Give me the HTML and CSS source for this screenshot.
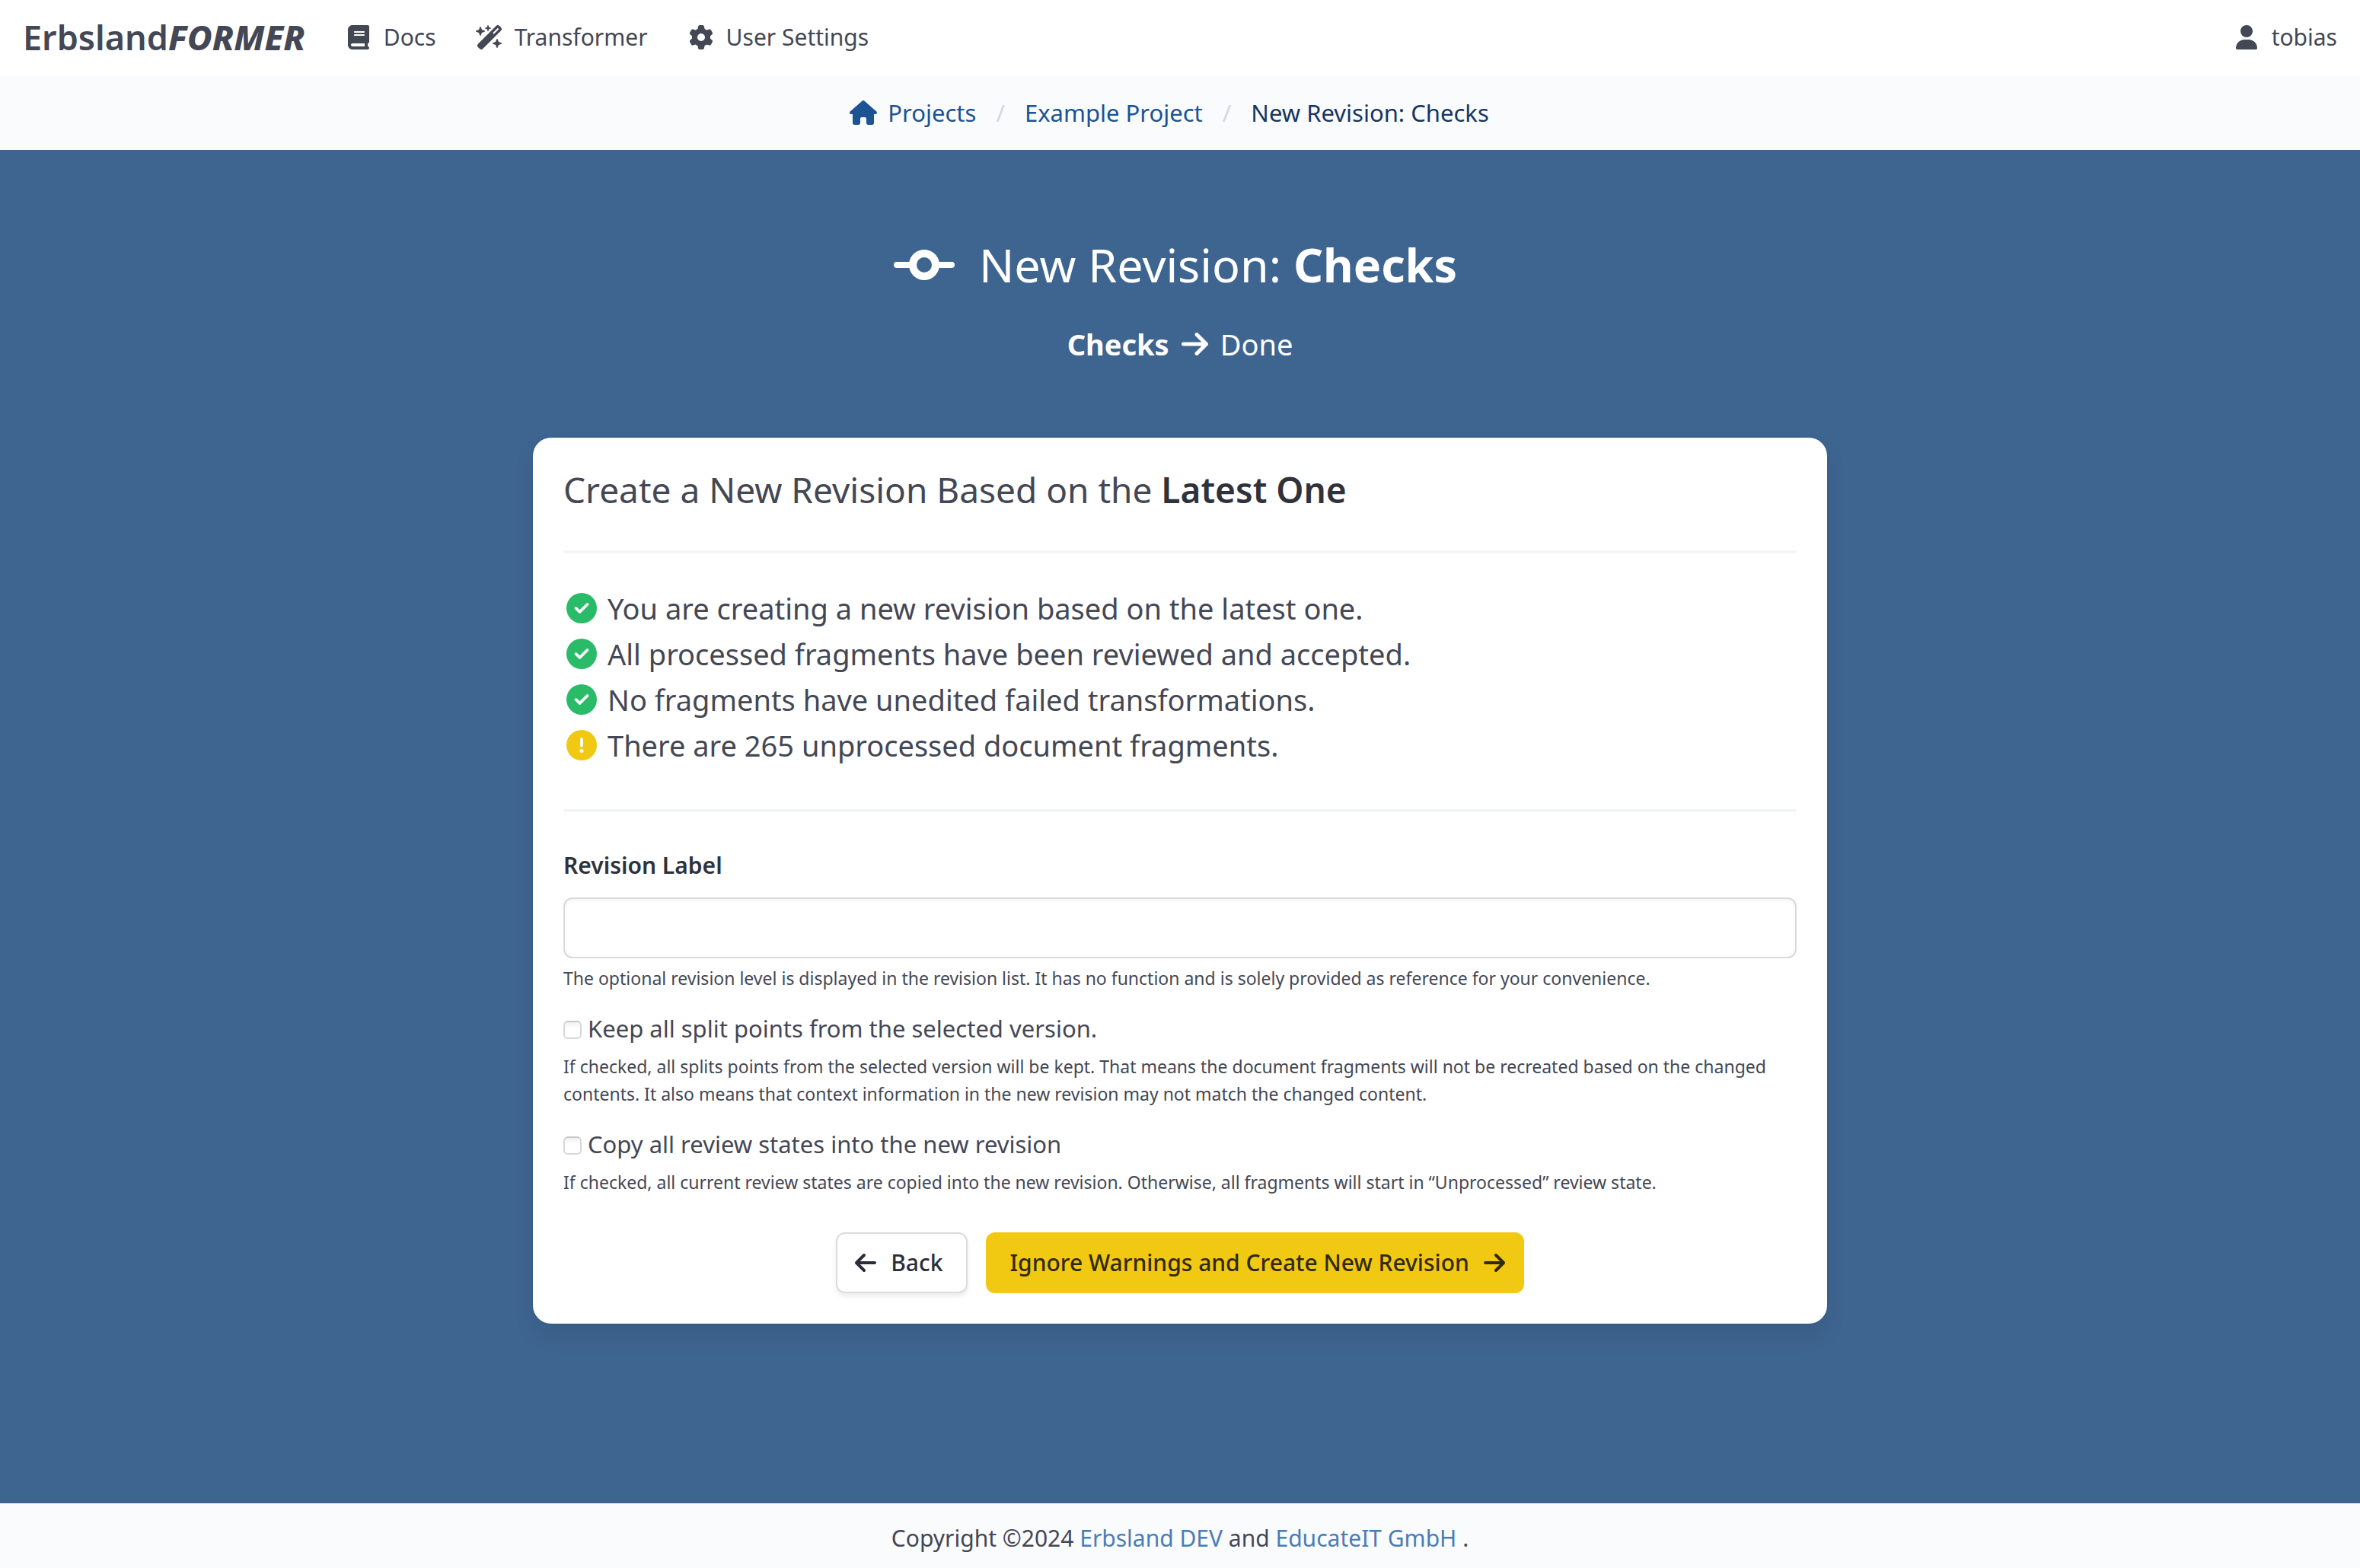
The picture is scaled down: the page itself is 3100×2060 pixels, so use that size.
FILE: index.html
```html
<!DOCTYPE html>
<html lang="en">
<head>
<meta charset="utf-8">
<meta name="viewport" content="width=device-width, initial-scale=1">
<title>New Revision: Checks</title>
<link rel="stylesheet" href="styles.css">
</head>
<body>
<svg class="sprite" aria-hidden="true">
  <symbol id="i-book" viewBox="0 0 448 512"><path d="M96 0C43 0 0 43 0 96V416c0 53 43 96 96 96H384h32c17.700 0 32-14.300 32-32s-14.300-32-32-32V384c17.700 0 32-14.300 32-32V32c0-17.700-14.300-32-32-32H384 96zm0 384H352v64H96c-17.700 0-32-14.300-32-32s14.300-32 32-32zm32-240c0-8.800 7.200-16 16-16H336c8.800 0 16 7.200 16 16s-7.200 16-16 16H144c-8.800 0-16-7.200-16-16zm16 48H336c8.800 0 16 7.200 16 16s-7.200 16-16 16H144c-8.800 0-16-7.200-16-16s7.200-16 16-16z"/></symbol>
  <symbol id="i-wand" viewBox="0 0 576 512"><path d="M234.700 42.700L197 56.800c-3 1.100-5 4-5 7.200s2 6.100 5 7.200l37.700 14.100L248.800 123c1.100 3 4 5 7.200 5s6.100-2 7.200-5l14.100-37.700L315 71.200c3-1.100 5-4 5-7.200s-2-6.100-5-7.200L277.300 42.700 263.200 5c-1.100-3-4-5-7.200-5s-6.100 2-7.200 5L234.700 42.700zM46.100 395.400c-18.700 18.700-18.700 49.100 0 67.900l34.600 34.600c18.700 18.700 49.100 18.700 67.900 0L529.900 116.500c18.700-18.700 18.700-49.100 0-67.900L495.300 14.100c-18.700-18.700-49.100-18.700-67.900 0L46.100 395.400zM484.600 82.600l-105 105-23.300-23.300 105-105 23.300 23.300zM7.500 117.200C3 118.900 0 123.200 0 128s3 9.100 7.500 10.800L64 160l21.200 56.500c1.700 4.500 6 7.500 10.800 7.500s9.100-3 10.800-7.500L128 160l56.500-21.200c4.500-1.700 7.500-6 7.500-10.800s-3-9.100-7.500-10.800L128 96 106.800 39.500C105.100 35 100.800 32 96 32s-9.100 3-10.800 7.500L64 96 7.500 117.200zm352 256c-4.500 1.700-7.500 6-7.500 10.800s3 9.100 7.500 10.800L416 416l21.200 56.500c1.700 4.500 6 7.500 10.800 7.500s9.100-3 10.800-7.500L480 416l56.500-21.200c4.500-1.700 7.500-6 7.500-10.800s-3-9.100-7.500-10.800L480 352l-21.200-56.500c-1.700-4.500-6-7.500-10.800-7.500s-9.100 3-10.800 7.500L416 352l-56.500 21.200z"/></symbol>
  <symbol id="i-gear" viewBox="0 0 512 512"><path d="M495.900 166.600c3.200 8.700 .5 18.400-6.400 24.600l-43.300 39.400c1.100 8.300 1.700 16.800 1.700 25.400s-.6 17.100-1.700 25.400l43.300 39.400c6.900 6.200 9.600 15.900 6.400 24.600c-4.400 11.900-9.700 23.300-15.800 34.300l-4.700 8.100c-6.600 11-14 21.400-22.100 31.200c-5.900 7.200-15.700 9.600-24.500 6.800l-55.700-17.700c-13.400 10.300-28.200 18.900-44 25.400l-12.500 57.100c-2 9.100-9 16.300-18.200 17.800c-13.800 2.300-28 3.500-42.500 3.500s-28.700-1.200-42.500-3.500c-9.200-1.500-16.200-8.700-18.200-17.800l-12.500-57.100c-15.800-6.500-30.600-15.100-44-25.400L83.100 425.900c-8.800 2.800-18.600 .3-24.500-6.800c-8.100-9.800-15.500-20.200-22.100-31.200l-4.700-8.100c-6.100-11-11.400-22.400-15.800-34.300c-3.200-8.700-.5-18.400 6.400-24.600l43.300-39.400C64.600 273.100 64 264.600 64 256s.6-17.100 1.700-25.400L22.400 191.200c-6.900-6.200-9.600-15.900-6.400-24.600c4.400-11.900 9.700-23.300 15.800-34.300l4.700-8.100c6.600-11 14-21.400 22.100-31.200c5.900-7.200 15.700-9.600 24.500-6.800l55.700 17.700c13.400-10.300 28.200-18.900 44-25.400l12.500-57.100c2-9.100 9-16.300 18.200-17.800C227.300 1.200 241.500 0 256 0s28.700 1.200 42.500 3.500c9.200 1.500 16.200 8.700 18.200 17.800l12.500 57.100c15.800 6.500 30.600 15.100 44 25.400l55.700-17.700c8.800-2.800 18.600-.3 24.500 6.800c8.100 9.800 15.500 20.200 22.100 31.200l4.700 8.100c6.100 11 11.400 22.400 15.800 34.300zM256 336a80 80 0 1 0 0-160 80 80 0 1 0 0 160z"/></symbol>
  <symbol id="i-user" viewBox="0 0 448 512"><path d="M224 256A128 128 0 1 0 224 0a128 128 0 1 0 0 256zm-45.700 48C79.800 304 0 383.800 0 482.300C0 498.700 13.300 512 29.700 512H418.300c16.400 0 29.700-13.300 29.700-29.700C448 383.800 368.200 304 269.700 304H178.300z"/></symbol>
  <symbol id="i-home" viewBox="0 0 576 512"><path d="M575.800 255.500c0 18-15 32.100-32 32.100h-32l.7 160.200c0 2.700-.2 5.400-.5 8.100V472c0 22.100-17.900 40-40 40H456c-1.100 0-2.200 0-3.300-.1c-1.400 .1-2.800 .1-4.200 .1H416 392c-22.100 0-40-17.900-40-40V448 384c0-17.700-14.300-32-32-32H256c-17.700 0-32 14.300-32 32v64 24c0 22.100-17.900 40-40 40H160 128.100c-1.500 0-3-.1-4.500-.2c-1.200 .1-2.400 .2-3.600 .2H104c-22.100 0-40-17.900-40-40V360c0-.9 0-1.900 .1-2.800V287.600H32c-18 0-32-14-32-32.100c0-9 3-17 10-24L266.400 8c7-7 15-8 22-8s15 2 21 7L564.800 231.500c8 7 12 15 11 24z"/></symbol>
  <symbol id="i-commit" viewBox="0 0 640 512"><path fill-rule="evenodd" d="M320 96a160 160 0 0 1 156.800 128H608a32 32 0 0 1 0 64H476.800a160 160 0 0 1-313.600 0H32a32 32 0 0 1 0-64H163.200A160 160 0 0 1 320 96zm0 80a80 80 0 1 0 0 160 80 80 0 1 0 0-160z"/></symbol>
  <symbol id="i-right" viewBox="0 0 448 512"><path d="M438.600 278.600c12.500-12.500 12.500-32.800 0-45.300l-160-160c-12.500-12.500-32.800-12.500-45.300 0s-12.500 32.800 0 45.300L338.800 224 32 224c-17.700 0-32 14.300-32 32s14.300 32 32 32l306.700 0L233.400 393.400c-12.500 12.500-12.500 32.800 0 45.300s32.800 12.500 45.300 0l160-160z"/></symbol>
  <symbol id="i-left" viewBox="0 0 448 512"><path d="M9.400 233.400c-12.500 12.500-12.500 32.800 0 45.300l160 160c12.500 12.500 32.800 12.500 45.300 0s12.500-32.800 0-45.300L109.200 288 416 288c17.700 0 32-14.300 32-32s-14.300-32-32-32l-306.700 0L214.600 118.600c12.500-12.500 12.500-32.800 0-45.300s-32.800-12.500-45.300 0l-160 160z"/></symbol>
  <symbol id="i-check" viewBox="0 0 512 512"><path d="M256 512A256 256 0 1 0 256 0a256 256 0 1 0 0 512zM369 209L241 337c-9.400 9.400-24.600 9.400-33.900 0l-64-64c-9.400-9.400-9.400-24.600 0-33.900s24.600-9.400 33.900 0l47 47L335 175c9.400-9.400 24.600-9.400 33.900 0s9.400 24.600 0 33.900z"/></symbol>
  <symbol id="i-warn" viewBox="0 0 512 512"><path d="M256 512A256 256 0 1 0 256 0a256 256 0 1 0 0 512zm0-384c13.300 0 24 10.700 24 24V264c0 13.300-10.700 24-24 24s-24-10.700-24-24V152c0-13.300 10.700-24 24-24zM224 352a32 32 0 1 1 64 0 32 32 0 1 1 -64 0z"/></symbol>
</svg>

<nav class="navbar" aria-label="Main">
  <a class="brand" href="#">Erbsland<em>FORMER</em></a>
  <a class="nav-item" href="#"><svg class="icon"><use href="#i-book"/></svg>Docs</a>
  <a class="nav-item" href="#"><svg class="icon"><use href="#i-wand"/></svg>Transformer</a>
  <a class="nav-item" href="#"><svg class="icon"><use href="#i-gear"/></svg>User Settings</a>
  <a class="nav-item nav-user" href="#"><svg class="icon"><use href="#i-user"/></svg>tobias</a>
</nav>

<nav class="breadcrumb" aria-label="Breadcrumb">
  <ol>
    <li><a href="#"><svg class="icon"><use href="#i-home"/></svg>Projects</a></li>
    <li><a href="#">Example Project</a></li>
    <li><a class="current" href="#" aria-current="page">New Revision: Checks</a></li>
  </ol>
</nav>

<main class="hero">
  <header class="hero-head">
    <h1><svg class="commit"><use href="#i-commit"/></svg><span>New Revision: <strong>Checks</strong></span></h1>
    <p class="steps"><strong>Checks</strong><svg class="arrow"><use href="#i-right"/></svg><span>Done</span></p>
  </header>

  <section class="card">
    <h2>Create a New Revision Based on the <strong>Latest One</strong></h2>
    <hr>
    <ul class="checks">
      <li><svg class="ok"><use href="#i-check"/></svg>You are creating a new revision based on the latest one.</li>
      <li><svg class="ok"><use href="#i-check"/></svg>All processed fragments have been reviewed and accepted.</li>
      <li><svg class="ok"><use href="#i-check"/></svg>No fragments have unedited failed transformations.</li>
      <li><svg class="warn"><use href="#i-warn"/></svg>There are 265 unprocessed document fragments.</li>
    </ul>
    <hr>
    <form>
      <div class="field">
        <label class="label" for="revision-label">Revision Label</label>
        <input class="input" type="text" id="revision-label">
        <p class="help">The optional revision level is displayed in the revision list. It has no function and is solely provided as reference for your convenience.</p>
      </div>
      <div class="field">
        <label class="checkbox"><input type="checkbox">Keep all split points from the selected version.</label>
        <p class="help">If checked, all splits points from the selected version will be kept. That means the document fragments will not be recreated based on the changed contents. It also means that context information in the new revision may not match the changed content.</p>
      </div>
      <div class="field">
        <label class="checkbox"><input type="checkbox">Copy all review states into the new revision</label>
        <p class="help">If checked, all current review states are copied into the new revision. Otherwise, all fragments will start in “Unprocessed” review state.</p>
      </div>
      <div class="buttons">
        <button class="button" type="button"><svg class="icon"><use href="#i-left"/></svg>Back</button>
        <button class="button primary" type="submit">Ignore Warnings and Create New Revision<svg class="icon"><use href="#i-right"/></svg></button>
      </div>
    </form>
  </section>
</main>

<footer class="footer">
  <p>Copyright ©2024 <a href="#">Erbsland DEV</a> and <a href="#">EducateIT GmbH</a> .</p>
</footer>
</body>
</html>
```
FILE: styles.css
```css
:root {
  --text: #444754;
  --strong: #2f323b;
  --blue: #3e6590;
  --size-small: 23px;
  --size-ui: 30px;
  --size-body: 31px;
  --size-large: 38px;
}

* { box-sizing: border-box; }

body {
  margin: 0;
  min-height: 100vh;
  display: flex;
  flex-direction: column;
  background: #fafbfd;
  color: var(--text);
  font-family: "Noto Sans", "Open Sans", sans-serif;
  font-size: var(--size-body);
  line-height: 48px;
}

h1, h2, p, ul, ol { margin: 0; padding: 0; font-weight: 400; }
ul, ol { list-style: none; }
a { color: inherit; text-decoration: none; }
svg { fill: currentColor; flex: none; }
.sprite { display: none; }
.icon { width: 36px; height: 32px; }

/* Top bar */
.navbar {
  display: flex;
  align-items: center;
  gap: 52px;
  height: 100px;
  padding: 0 30px 3px;
  background: #fff;
  font-size: var(--size-ui);
}
.brand { font-size: 45px; font-weight: 600; }
.brand em { font-weight: 800; }
.nav-item { display: flex; align-items: center; gap: 15px; }
.nav-user { margin-left: auto; }

/* Breadcrumb */
.breadcrumb {
  display: flex;
  align-items: center;
  justify-content: center;
  height: 97px;
  padding-bottom: 2px;
}
.breadcrumb ol { display: flex; padding-right: 28px; }
.breadcrumb li { display: flex; align-items: center; }
.breadcrumb li + li::before { content: "/"; margin: 0 26px; color: #d5d7db; }
.breadcrumb a { display: flex; align-items: center; gap: 14px; color: #1b5393; }
.breadcrumb .current { color: #17355f; }

/* Hero */
.hero { flex: 1; padding: 115px 40px 236px; background: var(--blue); }
.hero-head { color: #fff; text-align: center; }
h1 {
  display: flex;
  align-items: center;
  justify-content: center;
  gap: 32px;
  padding-right: 12px;
  font-size: 61px;
  line-height: 72px;
}
h1 strong { font-weight: 700; }
.commit { width: 80px; height: 64px; }
.steps {
  display: flex;
  align-items: center;
  justify-content: center;
  gap: 16px;
  margin-top: 38px;
  font-size: var(--size-large);
  line-height: 60px;
}
.arrow { width: 35px; height: 40px; }

/* Card */
.card {
  max-width: 1700px;
  margin: 93px auto 0;
  padding: 40px;
  border-radius: 24px;
  background: #fff;
  box-shadow: 0 16px 32px -4px rgba(10, 10, 10, .1), 0 0 0 2px rgba(10, 10, 10, .02);
}
h2 { font-size: 46px; line-height: 56px; }
h2 strong { font-weight: 600; color: var(--strong); }
hr { height: 4px; margin: 54px 0 42px; border: 0; background: #f4f5f6; }
h2 + hr { margin-top: 52px; }
.checks { font-size: var(--size-large); line-height: 60px; }
.checks li { display: flex; align-items: center; gap: 14px; padding-left: 4px; }
.checks svg { width: 40px; height: 40px; }
.ok { color: #29bb68; }
.warn { color: #f1c912; }

/* Form */
.field + .field { margin-top: 24px; }
.label {
  display: block;
  margin-bottom: 14px;
  color: var(--strong);
  font-size: var(--size-ui);
  font-weight: 600;
  line-height: 56px;
}
.input {
  display: block;
  width: 100%;
  height: 80px;
  padding: 0 20px;
  border: 2px solid #dbdbdb;
  border-radius: 12px;
  background: #fff;
  box-shadow: inset 0 2px 4px rgba(10, 10, 10, .05);
  font: inherit;
  color: inherit;
}
.help { margin-top: 8px; font-size: var(--size-small); line-height: 36px; }
.checkbox { display: flex; align-items: center; gap: 8px; }
.checkbox input {
  appearance: none;
  width: 24px;
  height: 24px;
  margin: 4px 0 0;
  border: 2px solid #d8d8d8;
  border-top-color: #c8c8c8;
  border-radius: 6px;
  background: linear-gradient(#f1f1f1, #fff 40%);
}
.buttons { display: flex; justify-content: center; gap: 24px; margin-top: 48px; }
.button {
  display: flex;
  align-items: center;
  gap: 15px;
  height: 80px;
  padding: 0 30px 0 19px;
  border: 2px solid #dbdcde;
  border-radius: 12px;
  background: #fff;
  box-shadow: 0 4px 6px rgba(10, 10, 10, .08);
  color: #2b2e3a;
  font: 500 var(--size-ui)/48px "Noto Sans", "Open Sans", sans-serif;
}
.button.primary {
  padding: 0 19px 0 30px;
  border-color: #f1c912;
  background: #f1c912;
  box-shadow: none;
  color: #31290a;
}

/* Footer */
.footer { padding: 22px 20px 15px; text-align: center; font-size: var(--size-ui); line-height: 48px; }
.footer a { color: #4a7db5; }
```
